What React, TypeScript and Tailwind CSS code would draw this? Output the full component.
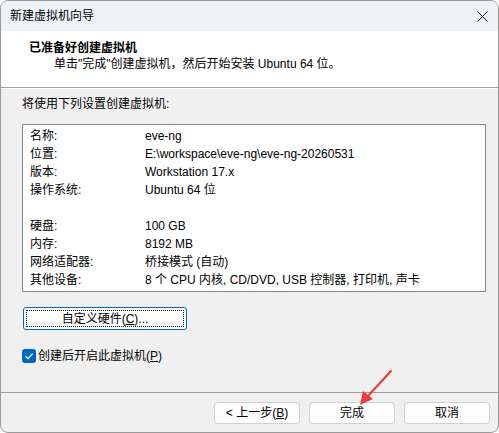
import React from "react";

const font = { fontFamily: '"Liberation Sans", "Noto Sans CJK SC", sans-serif' };

const rows: ([string, string] | null)[] = [
  ["名称:", "eve-ng"],
  ["位置:", "E:\\workspace\\eve-ng\\eve-ng-20260531"],
  ["版本:", "Workstation 17.x"],
  ["操作系统:", "Ubuntu 64 位"],
  null,
  ["硬盘:", "100 GB"],
  ["内存:", "8192 MB"],
  ["网络适配器:", "桥接模式 (自动)"],
  ["其他设备:", "8 个 CPU 内核, CD/DVD, USB 控制器, 打印机, 声卡"],
];

export default function App() {
  return (
    <div className="w-[499px] h-[433px] bg-white text-[12px] text-black leading-[16px]" style={font}>
      <div className="relative w-[499px] h-[433px] rounded-[8px] border border-[#9a9a9a] overflow-hidden flex flex-col bg-[#f0f0f0]">
        {/* title bar */}
        <div className="h-[30px] shrink-0 bg-[#eff2f5] flex items-center justify-between pl-[9px] pr-[10px]">
          <span>新建虚拟机向导</span>
          <svg width="11" height="11" viewBox="0 0 11 11" className="mt-[1px]">
            <path d="M0.5 0.5 L10.5 10.5 M10.5 0.5 L0.5 10.5" stroke="#1a1a1a" strokeWidth="1" />
          </svg>
        </div>
        {/* header */}
        <div className="h-[57px] shrink-0 bg-white border-b border-[#a0a0a0] pt-[9px] pl-[28px]">
          <div className="font-bold">已准备好创建虚拟机</div>
          <div className="pl-[25px]">单击"完成"创建虚拟机，然后开始安装 Ubuntu 64 位。</div>
        </div>
        {/* body */}
        <div className="flex-1 flex flex-col pl-[21px] pt-[7px] border-t border-white">
          <div>将使用下列设置创建虚拟机:</div>
          <div className="mt-[12px] w-[464px] h-[168px] bg-white border border-[#828790] pt-[2px] pl-[7px]">
            {rows.map((r, i) =>
              r ? (
                <div key={i} className="flex h-[18px] items-center">
                  <span className="w-[115px]">{r[0]}</span>
                  <span>{r[1]}</span>
                </div>
              ) : (
                <div key={i} className="h-[18px]" />
              )
            )}
          </div>
          <button
            className="mt-[15px] ml-[1px] w-[164px] h-[23px] bg-white border border-[#0067c0] rounded-[3px] p-[2px]"
            style={font}
          >
            <div className="w-full h-full border border-dotted border-black flex items-center justify-center leading-none">
              自定义硬件(<span className="underline">C</span>)...
            </div>
          </button>
          <div className="mt-[18px] flex items-center gap-[2px]">
            <div className="w-[14px] h-[14px] rounded-[3px] bg-[#0067c0] flex items-center justify-center">
              <svg width="10" height="10" viewBox="0 0 10 10">
                <path d="M1.5 5.2 L4 7.6 L8.6 2.6" fill="none" stroke="white" strokeWidth="1.3" />
              </svg>
            </div>
            <span>
              创建后开启此虚拟机(<span className="underline">P</span>)
            </span>
          </div>
        </div>
        {/* footer */}
        <div className="h-[40px] shrink-0 border-t border-[#a0a0a0] flex justify-end gap-[9px] pt-[9px] pr-[8px]">
          {[
            <>
              &lt; 上一步(<span className="underline">B</span>)
            </>,
            <>完成</>,
            <>取消</>,
          ].map((c, i) => (
            <button
              key={i}
              className="w-[86px] h-[22px] bg-[#fdfdfd] border border-[#d0d0d0] rounded-[4px] flex items-center justify-center leading-none"
              style={font}
            >
              {c}
            </button>
          ))}
        </div>
        {/* red arrow annotation */}
        <svg className="absolute left-[350px] top-[365px]" width="50" height="45" viewBox="0 0 50 45">
          <path d="M40 5 L16 31" stroke="#ee3b3b" strokeWidth="2.2" strokeLinecap="round" />
          <path d="M9 39 L12 25 L22 33 Z" fill="#ee3b3b" />
        </svg>
      </div>
    </div>
  );
}
